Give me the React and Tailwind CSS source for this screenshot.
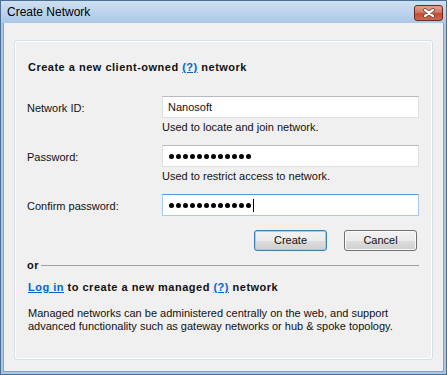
import React from "react";

function Dots() {
  return (
    <div className="flex gap-[2px] pl-[1px]">
      {Array.from({ length: 12 }).map((_, i) => (
        <span key={i} className="w-[5px] h-[5px] rounded-full bg-black" />
      ))}
    </div>
  );
}

function Field({ focused, children }) {
  return (
    <div
      className={
        focused
          ? "h-[22px] w-[257px] bg-white border border-[#a7cbec] border-t-[#5b98d0] flex items-center pl-[5px]"
          : "h-[22px] w-[257px] bg-white border border-[#dde0e5] border-t-[#b7babf] flex items-center pl-[5px]"
      }
    >
      {children}
    </div>
  );
}

function Row({ label, focused, hint, children }) {
  return (
    <div className="flex">
      <div className="w-[135px] pt-[6px]">{label}</div>
      <div className="flex flex-col">
        <Field focused={focused}>{children}</Field>
        {hint && <div className="mt-[3px]">{hint}</div>}
      </div>
    </div>
  );
}

function Button({ primary, children }) {
  return (
    <div
      className={
        primary
          ? "w-[73px] h-[21px] rounded-[3px] border border-[#3c7fb1] shadow-[inset_0_0_0_1px_#8fd3f5] bg-[linear-gradient(#f2f2f2,#ebebeb_50%,#dddddd_50%,#cfcfcf)] flex items-center justify-center"
          : "w-[73px] h-[21px] rounded-[3px] border border-[#707070] shadow-[inset_0_0_0_1px_#fbfbfb] bg-[linear-gradient(#f2f2f2,#ebebeb_50%,#dddddd_50%,#cfcfcf)] flex items-center justify-center"
      }
    >
      {children}
    </div>
  );
}

export default function App() {
  return (
    <div className="w-[447px] h-[375px] bg-[#a9c8e8] border border-[#4d6f95] flex flex-col font-['Liberation_Sans',Arial,sans-serif] text-[11px] leading-[13px] text-[#111]">
      {/* Title bar */}
      <div className="h-[22px] flex items-center justify-between pl-[6px] pr-[3px] bg-linear-to-b from-[#cfdff0] to-[#aac8e7]">
        <span className="text-[12px] leading-[14px] text-black">Create Network</span>
        <div className="w-[29px] h-[16px] mt-[2px] rounded-[3px] border border-[#6b2a20] bg-[linear-gradient(#e3a194,#d27a66_45%,#c04a33_55%,#cc6a52)] flex items-center justify-center">
          <svg width="14" height="10" viewBox="0 0 14 10">
            <path d="M3 2 L11 8 M11 2 L3 8" stroke="#5b3a33" strokeWidth="3.6" strokeLinecap="round" />
            <path d="M3 2 L11 8 M11 2 L3 8" stroke="#ffffff" strokeWidth="2.2" strokeLinecap="round" />
          </svg>
        </div>
      </div>

      {/* Body */}
      <div className="flex-1 px-[2px] pb-[2px]">
        <div className="h-full bg-[#f0f0f0] border-x border-b border-[#7fa6cf] px-[10px] pt-[17px]">
          <div className="h-[320px] rounded-[3px] border border-[#d5dfe5] shadow-[inset_0_0_0_1px_#ffffff] pl-[12px] pr-[13px] pt-[20px]">
            <div className="font-bold tracking-[0.5px] pl-[1px]">
              Create a new client-owned <span className="text-[#0066cc] underline">(?)</span> network
            </div>

            <div className="mt-[22px]">
              <Row label="Network ID:" hint="Used to locate and join network.">
                <span>Nanosoft</span>
              </Row>
            </div>
            <div className="mt-[11px]">
              <Row label="Password:" hint="Used to restrict access to network.">
                <Dots />
              </Row>
            </div>
            <div className="mt-[11px]">
              <Row label="Confirm password:" focused>
                <Dots />
                <span className="ml-[2px] w-[1px] h-[13px] bg-black" />
              </Row>
            </div>

            <div className="mt-[14px] flex justify-end gap-[17px] pr-[2px]">
              <Button primary>Create</Button>
              <Button>Cancel</Button>
            </div>

            <div className="mt-[8px] flex items-center">
              <span className="font-bold tracking-[0.5px]">or</span>
              <div className="flex-1 ml-[2px] h-[1px] bg-[#a0a0a0]" />
            </div>

            <div className="mt-[9px] font-bold tracking-[0.5px] pl-[1px]">
              <span className="text-[#0066cc] underline">Log in</span> to create a new managed{" "}
              <span className="text-[#0066cc] underline">(?)</span> network
            </div>

            <p className="mt-[13px] pl-[1px]">
              Managed networks can be administered centrally on the web, and support
              <br />
              advanced functionality such as gateway networks or hub &amp; spoke topology.
            </p>
          </div>
        </div>
      </div>
    </div>
  );
}
